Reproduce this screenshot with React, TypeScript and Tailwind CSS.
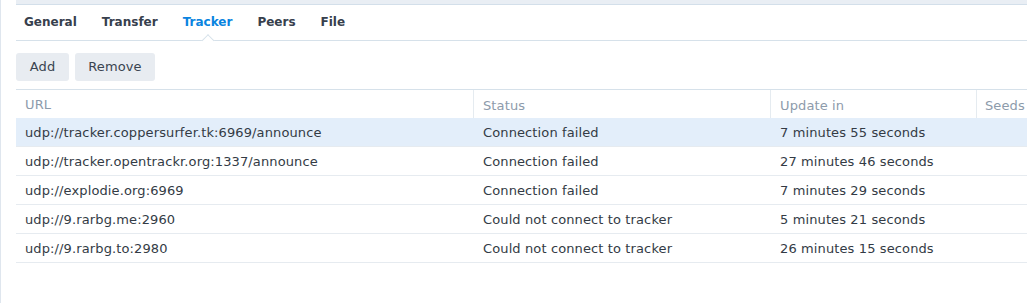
const rows = [
  { url: 'udp://tracker.coppersurfer.tk:6969/announce', status: 'Connection failed', update: '7 minutes 55 seconds', selected: true },
  { url: 'udp://tracker.opentrackr.org:1337/announce', status: 'Connection failed', update: '27 minutes 46 seconds' },
  { url: 'udp://explodie.org:6969', status: 'Connection failed', update: '7 minutes 29 seconds' },
  { url: 'udp://9.rarbg.me:2960', status: 'Could not connect to tracker', update: '5 minutes 21 seconds' },
  { url: 'udp://9.rarbg.to:2980', status: 'Could not connect to tracker', update: '26 minutes 15 seconds' },
];

const tabs = ['General', 'Transfer', 'Tracker', 'Peers', 'File'];

export default function App() {
  return (
    <div className="h-[303px] w-[1027px] overflow-hidden border-l border-[#dfe6ee] bg-white font-['DejaVu_Sans',sans-serif] text-[13px] tracking-[0.12px]">
      <div className="ml-[15px] h-[5px] border-b border-[#d3dfea] bg-[#e9eef4]" />

      {/* tabs */}
      <div className="ml-[15px] flex h-[36px] items-center gap-[25px] border-b border-[#d6e1ea] pb-[1px] pl-[8px] text-[12px] tracking-normal">
        {tabs.map((t) => (
          <div
            key={t}
            className={
              'relative flex h-full items-center font-bold ' +
              (t === 'Tracker' ? 'text-[#0a84e0]' : 'text-[#37404d]')
            }
          >
            {t}
            {t === 'Tracker' && (
              <span className="absolute bottom-[-6px] left-1/2 h-[9px] w-[9px] -translate-x-1/2 rotate-45 border-l border-t border-[#d6e1ea] bg-white" />
            )}
          </div>
        ))}
      </div>

      {/* toolbar */}
      <div className="ml-[15px] flex gap-[6px] pt-[12px] pb-[8px]">
        <button className="h-[28px] w-[53px] rounded-[3px] bg-[#e8ecf1] text-[#3a4450]">Add</button>
        <button className="h-[28px] w-[80px] rounded-[3px] bg-[#e8ecf1] text-[#3a4450]">Remove</button>
      </div>

      {/* table */}
      <div className="ml-[15px] border-t border-[#d6e1ea]">
        <div className="flex h-[28px] items-center text-[#8d9bab]">
          <div className="w-[457px] pl-[9px] pt-[2px]">URL</div>
          <div className="h-full w-[297px] border-l border-[#e5ebf0] pl-[9px] pt-[2px] leading-[28px]">Status</div>
          <div className="h-full w-[206px] border-l border-[#e5ebf0] pl-[9px] pt-[2px] leading-[28px]">Update in</div>
          <div className="h-full flex-1 border-l border-[#e5ebf0] pl-[8px] pt-[2px] leading-[28px]">Seeds</div>
        </div>
        {rows.map((r) => (
          <div
            key={r.url}
            className={
              'flex h-[29px] items-center border-b border-[#e6ebf0] pt-[2px] text-[#333b45] ' +
              (r.selected ? 'bg-[#e3eefa]' : '')
            }
          >
            <div className="w-[457px] pl-[9px]">{r.url}</div>
            <div className="w-[297px] pl-[10px]">{r.status}</div>
            <div className="w-[206px] pl-[10px]">{r.update}</div>
            <div className="flex-1" />
          </div>
        ))}
      </div>
    </div>
  );
}
